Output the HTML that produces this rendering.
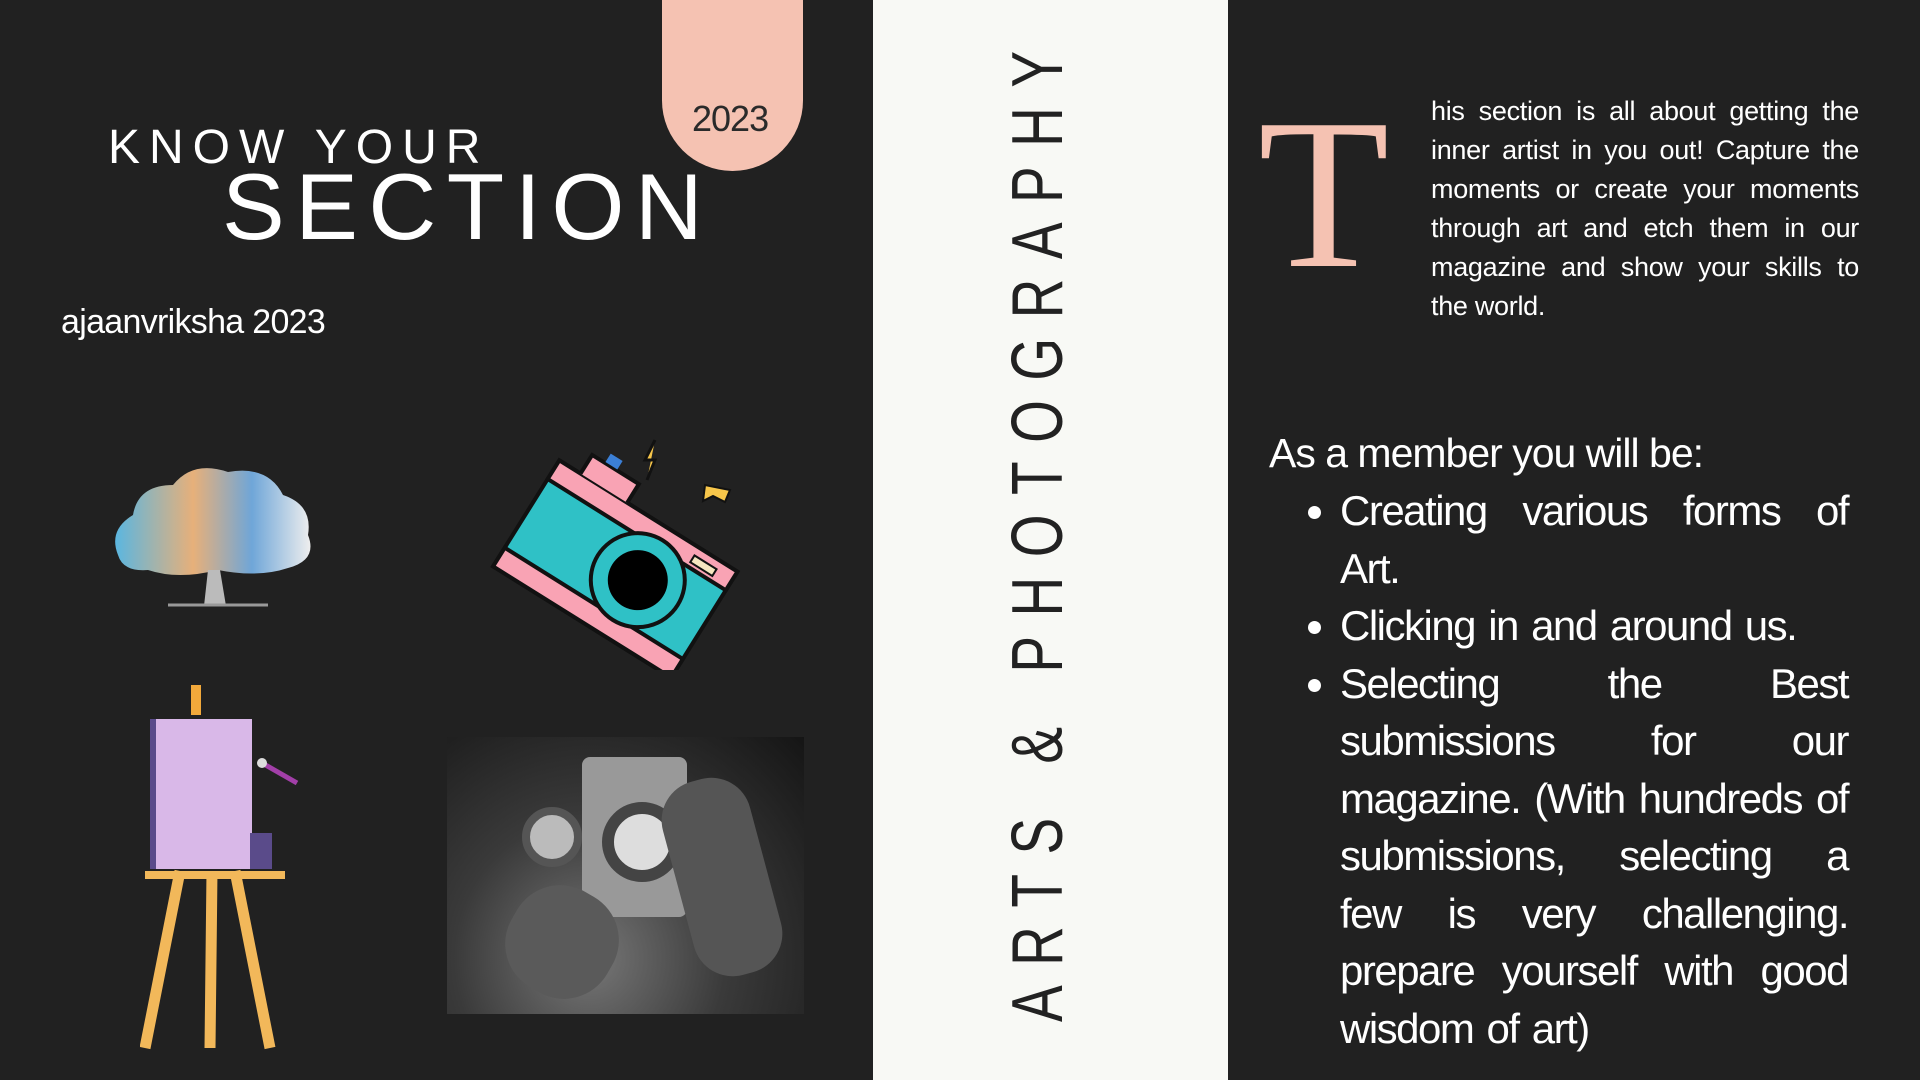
<!DOCTYPE html>
<html><head><meta charset="utf-8"><style>
*{margin:0;padding:0;box-sizing:border-box}
body{width:1920px;height:1080px;background:#212121;position:relative;overflow:hidden;font-family:"Liberation Sans",sans-serif;color:#fff}
.a{position:absolute;white-space:nowrap}
</style></head><body>
<div class="a" style="left:662px;top:0;width:141px;height:171px;background:#f5c2b2;border-radius:0 0 71px 71px"></div>
<div class="a" style="left:692px;top:98px;font-size:36px;color:#2a2a2a;letter-spacing:-1px">2023</div>
<div class="a" style="left:108px;top:120px;font-size:48px;letter-spacing:9px;font-weight:300">KNOW YOUR</div>
<div class="a" style="left:222px;top:160px;font-size:94px;letter-spacing:10.5px;line-height:1">SECTION</div>
<div class="a" style="left:61px;top:303px;font-size:34px;letter-spacing:-0.7px">ajaanvriksha 2023</div>

<div class="a" style="left:873px;top:0;width:355px;height:1080px;background:#f8f9f5"></div>
<div class="a" style="left:1002px;top:1022px;transform:rotate(-90deg) scaleX(0.764);transform-origin:0 0;font-size:72px;letter-spacing:25.5px;color:#222;line-height:1">ARTS &amp; PHOTOGRAPHY</div>

<div class="a" style="left:1258px;top:86px;font-family:'Liberation Serif',serif;font-size:215px;color:#f5c2b2;line-height:1">T</div>
<div class="a" style="left:1431px;top:92px;width:428px;white-space:normal;font-size:27px;line-height:39px;text-align:justify;text-align-last:left;letter-spacing:-0.3px">his section is all about getting the inner artist in you out! Capture the moments or create your moments through art and etch them in our magazine and show your skills to the world.</div>
<div class="a" style="left:1269px;top:430px;font-size:41px;letter-spacing:-1px">As a member you will be:</div>
<ul class="a" style="left:1340px;top:482px;width:508px;white-space:normal;font-size:42px;line-height:57.5px;text-align:justify;list-style:disc;letter-spacing:-1.5px;word-spacing:3px">
<li>Creating various forms of Art.</li>
<li>Clicking in and around us.</li>
<li>Selecting the Best submissions for our magazine. (With hundreds of submissions, selecting a few&nbsp;is very challenging. prepare yourself with good wisdom of art)</li>
</ul>

<!-- tree -->
<svg class="a" style="left:108px;top:460px" width="212" height="150">
<defs><linearGradient id="tg" x1="0" x2="1"><stop offset="0" stop-color="#5bb6e0"/><stop offset=".4" stop-color="#e7b07a"/><stop offset=".7" stop-color="#6fa6d8"/><stop offset="1" stop-color="#eee"/></linearGradient></defs>
<path d="M10 95 Q0 70 25 55 Q30 25 65 25 Q85 0 120 12 Q160 5 175 35 Q205 45 200 75 Q210 100 180 108 Q150 118 110 110 Q70 120 40 110 Q15 112 10 95Z" fill="url(#tg)"/>
<path d="M100 110 L96 146 L118 146 L112 110Z" fill="#bbb"/>
<path d="M60 145 H160" stroke="#999" stroke-width="3"/>
</svg>

<!-- camera -->
<svg class="a" style="left:480px;top:410px" width="270" height="260">
<path d="M175 30 l-10 20 h10 l-8 20" stroke="#111" stroke-width="3" fill="#f7c64a"/>
<path d="M225 75 l25 5 -5 12 -12 -6 -10 5z" fill="#f7c64a" stroke="#111" stroke-width="2"/>
<g transform="rotate(32 135 150)">
<rect x="35" y="95" width="210" height="125" fill="#2fc1c6" stroke="#111" stroke-width="4"/>
<rect x="35" y="95" width="210" height="22" fill="#f9a3b4" stroke="#111" stroke-width="4"/>
<rect x="35" y="198" width="210" height="22" fill="#f9a3b4" stroke="#111" stroke-width="4"/>
<path d="M60 95 v-22 h55 v22" fill="#f9a3b4" stroke="#111" stroke-width="4"/>
<rect x="75" y="62" width="14" height="10" fill="#3b7fd6"/>
<circle cx="165" cy="155" r="47" fill="#2fc1c6" stroke="#111" stroke-width="4"/>
<circle cx="165" cy="155" r="30" fill="#000"/>
<rect x="200" y="104" width="26" height="8" fill="#f5e6c0" stroke="#111" stroke-width="2"/>
</g>
</svg>

<!-- easel -->
<svg class="a" style="left:140px;top:683px" width="165" height="370">
<rect x="51" y="2" width="10" height="30" fill="#f2a93b"/>
<path d="M40 188 L5 365 M72 188 L70 365 M95 188 L130 365" stroke="#f2b85a" stroke-width="11"/>
<rect x="5" y="188" width="140" height="8" fill="#f2b85a"/>
<rect x="10" y="36" width="8" height="150" fill="#5a4b8a"/>
<rect x="16" y="36" width="96" height="150" fill="#d9b8e8"/>
<rect x="110" y="150" width="22" height="36" fill="#5a4b8a"/>
<path d="M122 80 L157 100" stroke="#a23fa8" stroke-width="5"/>
<circle cx="122" cy="80" r="5" fill="#ddd"/>
</svg>

<!-- photo -->
<div class="a" style="left:447px;top:737px;width:357px;height:277px;background:radial-gradient(ellipse at 40% 80%,#777 0%,#3a3a3a 45%,#151515 100%)">
<div class="a" style="left:75px;top:70px;width:60px;height:60px;border-radius:50%;background:#bbb;border:8px solid #555"></div>
<div class="a" style="left:135px;top:20px;width:105px;height:160px;background:#999;border-radius:8px"></div>
<div class="a" style="left:155px;top:65px;width:80px;height:80px;border-radius:50%;background:#ddd;border:12px solid #444"></div>
<div class="a" style="left:230px;top:40px;width:90px;height:200px;background:#555;border-radius:40px;transform:rotate(-15deg)"></div>
<div class="a" style="left:60px;top:150px;width:110px;height:110px;background:#5a5a5a;border-radius:50px;transform:rotate(30deg)"></div>
</div>
</body></html>
